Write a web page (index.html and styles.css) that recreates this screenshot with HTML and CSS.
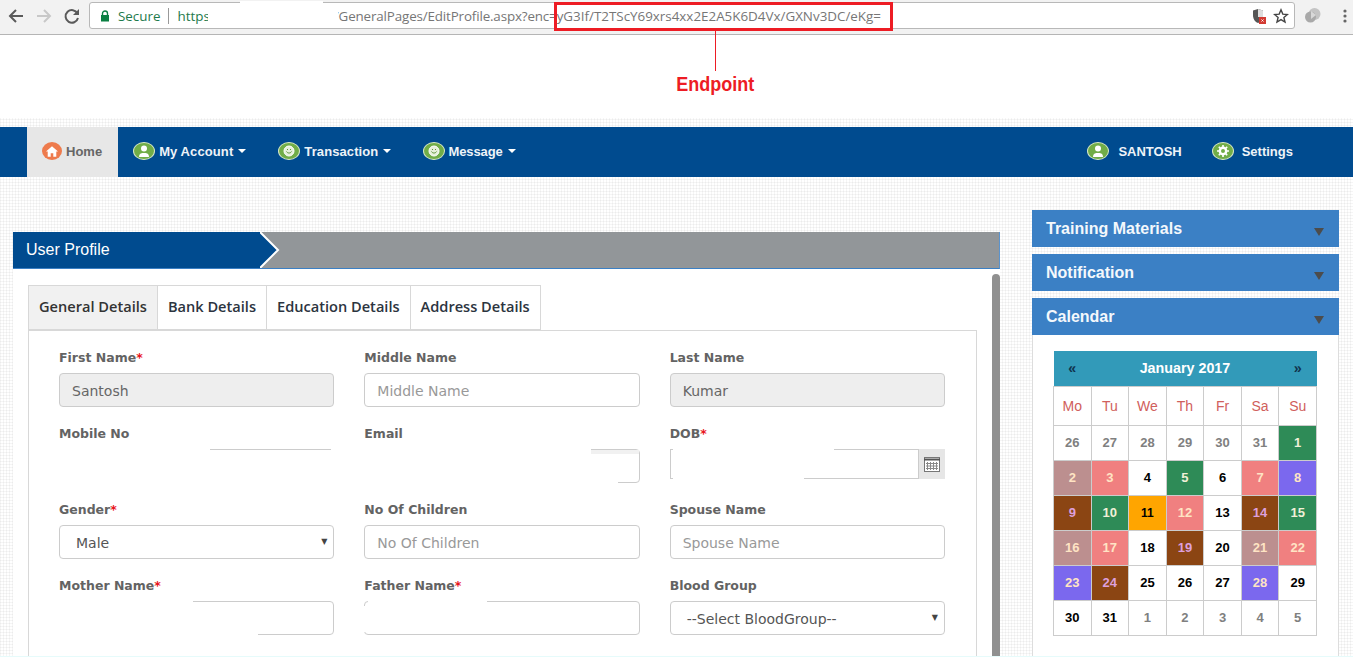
FILE: index.html
```html
<!DOCTYPE html>
<html lang="en">
<head>
	<title>Edit Profile</title>
	<link rel="stylesheet" href="styles.css">
</head>
<body>
	<div class="chrome">
		<svg class="ctl" width="18" height="18" viewBox="0 0 18 18"><path d="M16 9H3M9 3L3 9l6 6" fill="none" stroke="#5a5a5a" stroke-width="2"/></svg>
		<svg class="ctl" width="18" height="18" viewBox="0 0 18 18"><path d="M2 9h13M9 3l6 6-6 6" fill="none" stroke="#c8c8c8" stroke-width="2"/></svg>
		<svg class="ctl" width="18" height="18" viewBox="0 0 18 18"><path d="M14.5 6.5A6.3 6.3 0 1 0 15 11" fill="none" stroke="#5a5a5a" stroke-width="2"/><path d="M16 2v6h-6z" fill="#5a5a5a"/></svg>
		<div class="omnibox">
			<svg width="10" height="12" viewBox="0 0 10 12"><path d="M2.5 5V3.5a2.5 2.5 0 0 1 5 0V5" fill="none" stroke="#0b8043" stroke-width="1.4"/><rect x="1" y="5" width="8" height="6.5" fill="#0b8043"/></svg>
			<span class="secure">Secure</span>
			<span class="sep"></span>
			<span class="scheme">https</span>
			<span class="url">/GeneralPages/EditProfile.aspx?enc=</span><span class="url-end">yG3If/T2TScY69xrs4xx2E2A5K6D4Vx/GXNv3DC/eKg=</span>
			<span class="omni-icons">
				<svg width="14" height="16" viewBox="0 0 14 16"><path d="M6 1l5 1.500V7C11 11 9 14 6 15 3 14 1 11 1 7V2.500z" fill="#555"/><path d="M6 1l5 1.500V9H6z" fill="#ddd"/><rect x="7" y="9" width="7" height="7" fill="#d23a32"/><path d="M9.500 11.500l2 2m0-2l-2 2" stroke="#fff"/></svg>
				<svg width="16" height="16" viewBox="0 0 16 16"><path d="M8 1.800l1.800 4.300 4.600.4-3.500 3 1.100 4.500L8 11.600 4 14l1.100-4.500-3.500-3 4.600-.4z" fill="none" stroke="#444" stroke-width="1.400"/></svg>
			</span>
		</div>
		<svg class="ext" width="18" height="16" viewBox="0 0 18 16"><circle cx="10.500" cy="6" r="6" fill="#c4c4c4"/><circle cx="6.500" cy="9" r="5.500" fill="#a9a9a9"/><path d="M7 3l5 4-5 4z" fill="#d8d8d8"/></svg>
		<svg class="dots" width="4" height="14" viewBox="0 0 4 14"><circle cx="2" cy="2" r="1.600" fill="#666"/><circle cx="2" cy="7" r="1.600" fill="#666"/><circle cx="2" cy="12" r="1.600" fill="#666"/></svg>
		<div class="url-mark"></div>
		<div class="patch patch-url"></div>
		<div class="patch patch-url-top"></div>
	</div>

	<div class="note">
		<div class="note-inner">
			<span class="note-line"></span>
			<span class="note-text">Endpoint</span>
		</div>
	</div>

	<nav class="navbar">
		<a class="nav-item active"><span class="badge home"><svg width="12" height="11" viewBox="0 0 14 12"><path d="M7 0L0 6h2v6h3.500V8h3v4H12V6h2z" fill="#fff"/></svg></span>Home</a>
		<a class="nav-item"><span class="badge"><svg width="12" height="12" viewBox="0 0 12 12"><circle cx="6" cy="3.500" r="3" fill="#fff"/><path d="M1 12c0-4 3-4 5-4s5 0 5 4z" fill="#fff"/></svg></span>My Account<b class="caret"></b></a>
		<a class="nav-item"><span class="badge"><svg width="12" height="12" viewBox="0 0 12 12"><circle cx="6" cy="6" r="5" fill="#e6f0da" stroke="#fff"/><path d="M3.500 6.500c1 2 4 2 5 0M4.500 4v1M7.500 4v1" fill="none" stroke="#5d9438"/></svg></span>Transaction<b class="caret"></b></a>
		<a class="nav-item nav-msg"><span class="badge"><svg width="12" height="12" viewBox="0 0 12 12"><circle cx="6" cy="6" r="5" fill="#e6f0da" stroke="#fff"/><path d="M3.500 6.500c1 2 4 2 5 0M4.500 4v1M7.500 4v1" fill="none" stroke="#5d9438"/></svg></span>Message<b class="caret"></b></a>
		<a class="nav-item user"><span class="badge"><svg width="12" height="12" viewBox="0 0 12 12"><circle cx="6" cy="3.500" r="3" fill="#fff"/><path d="M1 12c0-4 3-4 5-4s5 0 5 4z" fill="#fff"/></svg></span>SANTOSH</a>
		<a class="nav-item settings"><span class="badge"><svg width="12" height="12" viewBox="0 0 12 12"><circle cx="6" cy="6" r="3.200" fill="none" stroke="#fff" stroke-width="2.400"/><path d="M6 0v2.500M6 9.500V12M0 6h2.500M9.500 6H12M1.800 1.800l1.800 1.800M8.400 8.400l1.800 1.800M10.200 1.800L8.400 3.600M3.600 8.400l-1.800 1.800" stroke="#fff" stroke-width="1.600"/></svg></span>Settings</a>
	</nav>

	<div class="content">
		<main class="main-panel">
			<div class="title-bar">
				<div class="title-tab">User Profile</div>
				<svg class="title-arrow" width="22" height="36" viewBox="0 0 22 36" preserveAspectRatio="none"><path d="M0 0l18 18L0 36h-2V0z" fill="#004b8f"/><path d="M0 0l18 18L0 36" fill="none" stroke="#fff" stroke-width="2"/></svg>
			</div>
			<div class="panel-body">
				<div class="scrollbar"></div>
				<ul class="tabs">
					<li class="tab active">General Details</li>
					<li class="tab">Bank Details</li>
					<li class="tab">Education Details</li>
					<li class="tab">Address Details</li>
				</ul>
				<div class="tab-pane">
					<div class="field">
						<label>First Name<em>*</em></label>
						<input class="input" type="text" value="Santosh" disabled>
					</div>
					<div class="field">
						<label>Middle Name</label>
						<input class="input" type="text" placeholder="Middle Name">
					</div>
					<div class="field">
						<label>Last Name</label>
						<input class="input" type="text" value="Kumar" disabled>
					</div>
					<div class="field">
						<label>Mobile No</label>
						<div class="box-wrap">
							<div class="mobile-line"></div>
						</div>
					</div>
					<div class="field">
						<label>Email</label>
						<div class="box-wrap">
							<input class="input" type="text">
							<div class="email-shade"></div>
							<div class="patch mask-email"></div>
							<div class="patch mask-email-low"></div>
						</div>
					</div>
					<div class="field">
						<label>DOB<em>*</em></label>
						<div class="box-wrap date-group">
							<input class="input date" type="text">
							<span class="addon">
								<svg width="16" height="15" viewBox="0 0 16 15"><rect x="0.500" y="0.500" width="15" height="14" fill="#fff" stroke="#777"/><path d="M0 2.500h16" stroke="#555" stroke-width="2"/><path d="M3.500 5v8M6.500 5v8M9.500 5v8M12.500 5v8M2 6.500h12M2 9h12M2 11.500h12" stroke="#888"/></svg>
							</span>
							<div class="patch mask-dob"></div>
							<div class="patch mask-dob-low"></div>
						</div>
					</div>
					<div class="field">
						<label>Gender<em>*</em></label>
						<div class="select"><span>Male</span><b class="select-arrow">▼</b></div>
					</div>
					<div class="field">
						<label>No Of Children</label>
						<input class="input" type="text" placeholder="No Of Children">
					</div>
					<div class="field">
						<label>Spouse Name</label>
						<input class="input" type="text" placeholder="Spouse Name">
					</div>
					<div class="field">
						<label>Mother Name<em>*</em></label>
						<div class="box-wrap">
							<input class="input" type="text">
							<div class="patch mask-mother"></div>
							<div class="patch mask-mother-low"></div>
						</div>
					</div>
					<div class="field">
						<label>Father Name<em>*</em></label>
						<div class="box-wrap">
							<input class="input" type="text">
							<div class="patch mask-father"></div>
							<div class="patch mask-father-side"></div>
						</div>
					</div>
					<div class="field">
						<label>Blood Group</label>
						<div class="select"><span>--Select BloodGroup--</span><b class="select-arrow">▼</b></div>
					</div>
				</div>
			</div>
		</main>

		<aside class="sidebar">
			<div class="side-head">Training Materials<b class="side-arrow"></b></div>
			<div class="side-head">Notification<b class="side-arrow"></b></div>
			<div class="side-head">Calendar<b class="side-arrow"></b></div>
			<div class="side-body">
				<table class="calendar">
					<tr class="cal-top"><th class="cal-nav">«</th><th colspan="5">January 2017</th><th class="cal-nav">»</th></tr>
					<tr class="cal-week"><td>Mo</td><td>Tu</td><td>We</td><td>Th</td><td>Fr</td><td>Sa</td><td>Su</td></tr>
					<tr><td class="old">26</td><td class="old">27</td><td class="old">28</td><td class="old">29</td><td class="old">30</td><td class="old">31</td><td class="green">1</td></tr>
					<tr><td class="rose">2</td><td class="coral">3</td><td>4</td><td class="green">5</td><td>6</td><td class="coral">7</td><td class="violet">8</td></tr>
					<tr><td class="brown">9</td><td class="green">10</td><td class="today">11</td><td class="coral">12</td><td>13</td><td class="brown">14</td><td class="green">15</td></tr>
					<tr><td class="rose">16</td><td class="coral">17</td><td>18</td><td class="brown">19</td><td>20</td><td class="rose">21</td><td class="coral">22</td></tr>
					<tr><td class="violet">23</td><td class="brown">24</td><td>25</td><td>26</td><td>27</td><td class="violet">28</td><td>29</td></tr>
					<tr><td>30</td><td>31</td><td class="old">1</td><td class="old">2</td><td class="old">3</td><td class="old">4</td><td class="old">5</td></tr>
				</table>
			</div>
		</aside>
	</div>
</body>
</html>
```

FILE: styles.css
```css
html {
	height: 657px;
	overflow: hidden;
}

body {
	height: 657px;
	box-sizing: border-box;
	margin: 0;
	overflow: hidden;
	border-bottom: 1px solid #e6fbfb;
	background-color: #fff;
	background-image:
		repeating-linear-gradient(0deg, rgba(0, 0, 0, 0.04) 0 1px, transparent 1px 3px),
		repeating-linear-gradient(90deg, rgba(0, 0, 0, 0.04) 0 1px, transparent 1px 3px);
	font-family: "Liberation Sans", Arial, sans-serif;
}

/* browser bar */
.chrome {
	position: relative;
	display: flex;
	align-items: center;
	height: 31px;
	padding-left: 7px;
	padding-bottom: 3px;
	background-color: #f2f2f2;
	border-bottom: 1px solid #b5b5b5;
}

.ctl { margin-right: 10px; flex: none; }

.omnibox {
	display: flex;
	align-items: center;
	width: 1206px;
	height: 27px;
	margin-left: -2px;
	padding-left: 10px;
	box-sizing: border-box;
	background-color: #fff;
	border: 1px solid #b8b8b8;
	border-radius: 3px;
	font-family: "Open Sans", sans-serif;
	font-size: 13.4px;
	white-space: nowrap;
	flex: none;
}

.secure { margin-left: 8px; color: #1e7a4c; }
.sep { width: 1px; height: 16px; margin: 0 8px; background-color: #999; }
.scheme { color: #1e7a4c; }
.url { margin-left: 124px; color: #767676; letter-spacing: -0.15px; }
.url-end { color: #767676; }

.omni-icons {
	display: flex;
	align-items: center;
	gap: 7px;
	margin-left: auto;
	margin-right: 5px;
}

.ext { margin-left: 9px; flex: none; }
.dots { margin-left: 21px; flex: none; }

.url-mark {
	position: absolute;
	left: 554px;
	top: 2px;
	width: 333px;
	height: 23px;
	border: 3px solid #ed1c24;
}

.patch {
	position: absolute;
	background-color: #fff;
}

.patch-url {
	left: 208px;
	top: 4px;
	width: 130px;
	height: 24px;
}

.patch-url-top {
	left: 240px;
	top: 1px;
	width: 83px;
	height: 4px;
}

/* annotation */
.note {
	height: 92px;
	box-sizing: border-box;
	padding-left: 677px;
	background-image: linear-gradient(#fff 0 83px, transparent 83px);
}

.note-inner {
	display: flex;
	flex-direction: column;
	align-items: center;
	width: 77px;
}

.note-line {
	position: relative;
	z-index: 1;
	width: 1px;
	height: 40px;
	margin-top: -4px;
	background-color: #ed1c24;
}

.note-text {
	color: #ed1c24;
	font-size: 20px;
	font-weight: bold;
	line-height: 26px;
	transform: scaleX(0.9);
}

/* nav */
.navbar {
	display: flex;
	align-items: stretch;
	height: 50px;
	padding-left: 27px;
	background-color: #004b8f;
	color: #eef3f8;
	font-size: 13px;
	font-weight: bold;
}

.nav-item {
	display: flex;
	align-items: center;
	padding: 0 17px 2px 15px;
	white-space: nowrap;
	letter-spacing: 0.1px;
}

.nav-item.active {
	padding-right: 16px;
	background-color: #e7e7e7;
	color: #666;
	letter-spacing: 0;
}

.nav-msg { letter-spacing: -0.1px; }
.nav-msg .badge { margin-right: 3px; }

.nav-item.user { margin-left: auto; padding-right: 15px; letter-spacing: 0; }
.nav-item.settings { margin-right: 45px; padding-right: 15px; letter-spacing: 0; }

.badge {
	display: inline-flex;
	align-items: center;
	justify-content: center;
	width: 22px;
	height: 18px;
	margin-right: 4px;
	border-radius: 50%;
	background-color: #71ad47;
	border: 1px solid #d8e8c8;
	box-sizing: border-box;
}

.badge.home {
	width: 20px;
	background-color: #ee7b4d;
	border: none;
}

.user .badge { margin-right: 9px; }
.settings .badge { margin-right: 8px; }

.caret {
	width: 0;
	height: 0;
	margin-left: 5px;
	border: 4px solid transparent;
	border-top-color: #fff;
	border-bottom: 0;
}

/* content */
.content {
	display: flex;
	align-items: flex-start;
	padding: 33px 14px 0 13px;
}

.main-panel {
	width: 987px;
	margin-top: 22px;
	flex: none;
}

.title-bar {
	display: flex;
	height: 36px;
	background-color: #929699;
	border-bottom: 1px solid #3b80c5;
	border-right: 1px solid #5b93cc;
}

.title-tab {
	width: 247px;
	padding-left: 13px;
	box-sizing: border-box;
	background-color: #004b8f;
	color: #fff;
	font-size: 16px;
	line-height: 35px;
}

.title-arrow { flex: none; }

.panel-body {
	position: relative;
	height: 388px;
	box-sizing: border-box;
	padding: 16px 0 0 15px;
	background-color: #fff;
}

.scrollbar {
	position: absolute;
	right: 0;
	top: 5px;
	bottom: 0;
	width: 8px;
	border-radius: 4px 4px 0 0;
	background-color: #909090;
}

.tabs {
	display: flex;
	margin: 0;
	padding: 0;
	list-style: none;
}

.tab {
	height: 43px;
	padding: 0 10px;
	border: 1px solid #d8d8d8;
	border-left: 0;
	color: #2c3440;
	font-family: "Open Sans", sans-serif;
	font-size: 14.6px;
	font-weight: 600;
	line-height: 41px;
}

.tab.active {
	border-left: 1px solid #d8d8d8;
	background-color: #f1f1f1;
	color: #333;
}

.tab-pane {
	display: grid;
	grid-template-columns: repeat(3, 1fr);
	column-gap: 30px;
	row-gap: 19px;
	align-content: start;
	width: 949px;
	height: 327px;
	box-sizing: border-box;
	padding: 19px 31px 0 30px;
	border: 1px solid #d8d8d8;
	border-bottom: 0;
}

.field label {
	display: block;
	height: 16px;
	margin-bottom: 7px;
	color: #636363;
	font-family: "DejaVu Sans", Verdana, sans-serif;
	font-size: 12.5px;
	font-weight: bold;
	line-height: 16px;
}

.field em {
	color: #e8141c;
	font-style: normal;
}

.input, .select {
	display: block;
	width: 100%;
	height: 34px;
	box-sizing: border-box;
	padding: 2px 12px 0;
	border: 1px solid #ccc;
	border-radius: 4px;
	background-color: #fff;
	color: #555;
	font-family: "DejaVu Sans", Verdana, sans-serif;
	font-size: 14px;
}

.input::placeholder { color: #999; opacity: 1; }

.input:disabled {
	background-color: #eee;
	color: #666;
}

.select {
	display: flex;
	align-items: center;
	justify-content: space-between;
	padding: 2px 6px 0 16px;
	color: #555;
}

.select-arrow {
	margin-top: -3px;
	font-size: 8px;
	color: #444;
	font-weight: normal;
}

.box-wrap { position: relative; height: 34px; }

.date-group {
	display: flex;
	height: 30px;
}

.input.date {
	height: 30px;
	flex: 1;
	border-radius: 0;
}

.addon {
	display: flex;
	align-items: center;
	justify-content: center;
	width: 26px;
	background-color: #e6e6e6;
}

/* blanked parts of the redacted fields */
.mobile-line {
	width: 121px;
	margin-left: 151px;
	border-top: 1px solid #ccc;
}

.email-shade {
	position: absolute;
	right: 1px;
	top: 1px;
	width: 48px;
	height: 4px;
	background-color: #f1f1f1;
}

.mask-email { left: -2px; top: -2px; width: 229px; height: 38px; }
.mask-email-low { left: -2px; top: 20px; width: 256px; height: 16px; }
.mask-dob { left: 3px; top: -1px; width: 161px; height: 16px; }
.mask-dob-low { left: 3px; top: 15px; width: 131px; height: 16px; }
.mask-mother { left: -2px; top: -2px; width: 136px; height: 36px; }
.mask-mother-low { left: -2px; top: 20px; width: 201px; height: 16px; }
.mask-father { left: 4px; top: -2px; width: 119px; height: 4px; }
.mask-father-side { left: -1px; top: 5px; width: 3px; height: 26px; }

/* side */
.sidebar {
	width: 307px;
	margin-left: 32px;
	flex: none;
}

.side-head {
	position: relative;
	height: 37px;
	margin-bottom: 7px;
	padding-left: 14px;
	background-color: #3b80c5;
	color: #f4f8fc;
	font-size: 16px;
	font-weight: bold;
	line-height: 37px;
}

.side-head:nth-child(3) { margin-bottom: 0; }

.side-arrow {
	position: absolute;
	right: 15px;
	top: 18px;
	width: 0;
	height: 0;
	border: 5px solid transparent;
	border-top: 8px solid #4c4c4c;
	border-bottom: 0;
}

.side-body {
	height: 321px;
	padding: 16px 21px 0 20px;
	background-color: #fff;
	border: 1px solid #ddd;
	border-top: 0;
	border-bottom: 0;
	box-sizing: border-box;
}

.calendar {
	width: 264px;
	border-collapse: collapse;
	table-layout: fixed;
	font-size: 13px;
	font-weight: bold;
	text-align: center;
}

.calendar td {
	height: 34px;
	padding: 0;
	border: 1px solid #ccc;
	color: #000;
}

.cal-top th {
	height: 35px;
	padding: 0;
	box-sizing: border-box;
	background-color: #329ab9;
	color: #fff;
	font-size: 14.3px;
}

.cal-top .cal-nav { color: #10344d; }

.calendar .cal-week td {
	height: 38px;
	color: #d0605c;
	font-weight: normal;
	font-size: 14px;
}

.calendar td.old { color: #808080; }
.calendar td.green { background-color: #2e8b57; color: #f0f0d8; }
.calendar td.rose { background-color: #bc8f8f; color: #ffe4c4; }
.calendar td.coral { background-color: #f08080; color: #ffe4c4; }
.calendar td.violet { background-color: #7b68ee; color: #ffe4c4; }
.calendar td.brown { background-color: #8b4513; color: #dda0dd; }
.calendar td.today { background-color: #ffa500; font-size: 12px; }
```
